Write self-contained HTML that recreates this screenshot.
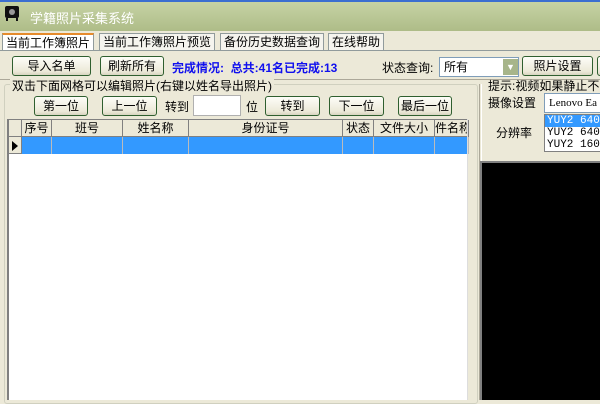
<!DOCTYPE html>
<html><head><meta charset="utf-8"><style>
*{box-sizing:border-box;margin:0;padding:0}
body{width:600px;height:400px;overflow:hidden;background:#ece9d8;font-family:"Liberation Sans","Noto Sans CJK SC",sans-serif;font-size:12px;color:#000;position:relative}
.a{position:absolute}
.btn{position:absolute;height:20px;border:1px solid #2f5f2f;border-radius:3px;background:linear-gradient(#fdfdf8,#ece9d8 80%,#d8d4c0);text-align:center;line-height:18px;font-size:12px}
.tab{position:absolute;top:33px;height:17px;border:1px solid #919b9c;border-bottom:none;background:#f5f4ee;line-height:16px;padding:0 3px;font-size:12px}
.grid{position:absolute;left:7px;top:119px;width:460px;height:281px;background:#fff;border-left:2px solid #808080;border-top:1px solid #808080}
.hd{position:absolute;top:0;height:17px;background:#ece9d8;border-right:1px solid #808080;border-bottom:1px solid #808080;text-align:center;line-height:16px;font-size:12px;overflow:hidden;white-space:nowrap}
.cl{position:absolute;top:17px;height:17px;background:#3399ff;border-right:1px solid #bbb}
</style></head><body>
<div class="a" style="left:0;top:0;width:600px;height:2px;background:#3b6fd0"></div>
<div class="a" style="left:0;top:2px;width:600px;height:29px;background:linear-gradient(#c6d3a4,#aebc88)"></div>
<div class="a" style="left:5px;top:6px;width:14px;height:12px;background:#111;border-radius:2px"></div>
<div class="a" style="left:9px;top:9px;width:6px;height:6px;background:#999;border-radius:3px"></div>
<div class="a" style="left:6px;top:18px;width:2px;height:3px;background:#111"></div>
<div class="a" style="left:16px;top:18px;width:2px;height:3px;background:#111"></div>
<div class="a" style="left:30px;top:8px;color:#fff;font-size:13px">学籍照片采集系统</div>
<div class="tab" style="left:2px;top:33px;height:18px;background:#fff;border-top:2px solid #e68b2c">当前工作簿照片</div>
<div class="tab" style="left:99px">当前工作簿照片预览</div>
<div class="tab" style="left:220px">备份历史数据查询</div>
<div class="tab" style="left:328px">在线帮助</div>
<div class="a" style="left:0;top:50px;width:600px;height:1px;background:#919b9c"></div>
<div class="btn" style="left:12px;top:56px;width:79px">导入名单</div>
<div class="btn" style="left:100px;top:56px;width:64px">刷新所有</div>
<div class="a" style="left:172px;top:59px;color:#1010ee;font-weight:bold;font-size:12px">完成情况: &nbsp;总共:41名已完成:13</div>
<div class="a" style="left:382px;top:59px">状态查询:</div>
<div class="a" style="left:439px;top:57px;width:80px;height:20px;background:#fff;border:1px solid #7f9db9;padding-left:4px;line-height:18px">所有</div>
<div class="a" style="left:503px;top:59px;width:15px;height:16px;background:#a7b58a;color:#fff;font-size:9px;text-align:center;line-height:16px">▼</div>
<div class="btn" style="left:522px;top:56px;width:71px">照片设置</div>
<div class="btn" style="left:597px;top:56px;width:10px"></div>
<div class="a" style="left:0;top:79px;width:600px;height:1px;background:#aca899"></div>
<div class="a" style="left:4px;top:84px;width:474px;height:320px;border:1px solid #d0d0bf;border-radius:3px"></div>
<div class="a" style="left:10px;top:77px;background:#ece9d8;padding:0 2px">双击下面网格可以编辑照片(右键以姓名导出照片)</div>
<div class="btn" style="left:34px;top:96px;width:54px">第一位</div>
<div class="btn" style="left:102px;top:96px;width:55px">上一位</div>
<div class="a" style="left:165px;top:98px">转到</div>
<div class="a" style="left:193px;top:95px;width:48px;height:21px;background:#fff;border:1px solid #b0b0b0"></div>
<div class="a" style="left:246px;top:98px">位</div>
<div class="btn" style="left:265px;top:96px;width:55px">转到</div>
<div class="btn" style="left:329px;top:96px;width:55px">下一位</div>
<div class="btn" style="left:398px;top:96px;width:54px">最后一位</div>
<div class="grid">
<div class="hd" style="left:0;width:13px"></div>
<div class="hd" style="left:13px;width:30px">序号</div>
<div class="hd" style="left:43px;width:71px">班号</div>
<div class="hd" style="left:114px;width:66px">姓名称</div>
<div class="hd" style="left:180px;width:154px">身份证号</div>
<div class="hd" style="left:334px;width:31px">状态</div>
<div class="hd" style="left:365px;width:61px">文件大小</div>
<div class="hd" style="left:426px;width:34px;text-align:left">件名称</div>
<div class="a" style="left:0;top:17px;width:13px;height:17px;background:#ece9d8;border-right:1px solid #808080;border-bottom:1px solid #808080"></div>
<div class="a" style="left:3px;top:21px;width:0;height:0;border-top:5px solid transparent;border-bottom:5px solid transparent;border-left:6px solid #000"></div>
<div class="cl" style="left:13px;width:30px"></div>
<div class="cl" style="left:43px;width:71px"></div>
<div class="cl" style="left:114px;width:66px"></div>
<div class="cl" style="left:180px;width:154px"></div>
<div class="cl" style="left:334px;width:31px"></div>
<div class="cl" style="left:365px;width:61px"></div>
<div class="cl" style="left:426px;width:34px"></div>
</div>
<div class="a" style="left:467px;top:119px;width:1px;height:281px;background:#ddd"></div>
<div class="a" style="left:479px;top:84px;width:1px;height:316px;background:#aca899"></div>
<div class="a" style="left:481px;top:84px;width:1px;height:316px;background:#fff"></div>
<div class="a" style="left:488px;top:77px;white-space:nowrap">提示:视频如果静止不</div>
<div class="a" style="left:488px;top:94px">摄像设置</div>
<div class="a" style="left:544px;top:93px;width:60px;height:20px;background:#fff;border:1px solid #7f9db9;font-family:'Liberation Serif',serif;font-size:11px;line-height:18px;padding-left:4px;white-space:nowrap">Lenovo Ea</div>
<div class="a" style="left:496px;top:124px">分辨率</div>
<div class="a" style="left:544px;top:114px;width:60px;height:38px;background:#fff;border:1px solid #808080;font-family:'Liberation Mono',monospace;font-size:11px;line-height:12px;white-space:nowrap;overflow:hidden">
<div style="background:#3399ff;color:#fff;padding-left:2px">YUY2 640x</div>
<div style="padding-left:2px">YUY2 640x</div>
<div style="padding-left:2px">YUY2 160x</div>
</div>
<div class="a" style="left:480px;top:161px;width:120px;height:239px;background:#000;border-left:2px solid #808080;border-top:2px solid #808080"></div>
</body></html>
